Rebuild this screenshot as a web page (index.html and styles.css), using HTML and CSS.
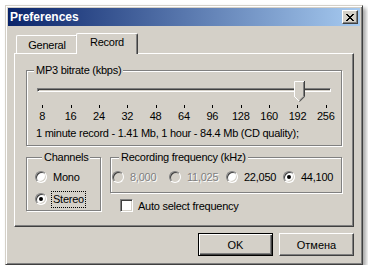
FILE: index.html
```html
<!DOCTYPE html>
<html lang="en">
<head>
  <meta charset="UTF-8">
  <title>Preferences</title>
  <link rel="stylesheet" href="styles.css">
</head>
<body>
  <div class="window">
    <!-- title bar -->
    <div class="titlebar">
      <span class="title">Preferences</span>
      <button class="close-btn">
        <svg width="8" height="7" viewBox="0 0 8 7">
          <path d="M0 0h2v1h-2zM6 0h2v1h-2zM1 1h2v1h-2zM5 1h2v1h-2zM2 2h4v1h-4zM3 3h2v1h-2zM2 4h4v1h-4zM1 5h2v1h-2zM5 5h2v1h-2zM0 6h2v1h-2zM6 6h2v1h-2z" fill="#000"/>
        </svg>
      </button>
    </div>

    <!-- tabs -->
    <div class="tabs">
      <div class="tab">General</div>
      <div class="tab active">Record</div>
    </div>

    <div class="panel">
      <!-- MP3 bitrate -->
      <div class="group bitrate">
        <span class="group-title">MP3 bitrate (kbps)</span>
        <div class="slider">
          <div class="track"></div>
          <svg class="thumb" width="11" height="21" viewBox="0 0 11 21">
            <polygon points="0,0 11,0 11,16 5.5,21 0,16" fill="#d4d0c8"/>
            <polyline points="0.5,16 0.5,0.5 10,0.5" fill="none" stroke="#fff"/>
            <polyline points="0.5,15.5 5.5,20.5" fill="none" stroke="#fff"/>
            <polyline points="10.5,0 10.5,15.7 5.5,20.7" fill="none" stroke="#404040"/>
            <polyline points="9.5,1 9.5,15.3 5.5,19.3" fill="none" stroke="#808080"/>
          </svg>
        </div>
        <div class="scale">
          <span>8</span><span>16</span><span>24</span><span>32</span><span>48</span><span>64</span>
          <span>96</span><span>128</span><span>160</span><span>192</span><span>256</span>
        </div>
        <div class="info">1 minute record - 1.41 Mb, 1 hour - 84.4 Mb (CD quality);</div>
      </div>

      <div class="row">
        <!-- Channels -->
        <div class="group channels">
          <span class="group-title">Channels</span>
          <label class="radio"><i class="dot"></i><span class="text">Mono</span></label>
          <label class="radio"><i class="dot checked"></i><span class="text focus">Stereo</span></label>
        </div>

        <div class="col">
          <!-- Recording frequency -->
          <div class="group freq">
            <span class="group-title">Recording frequency (kHz)</span>
            <div class="freq-list">
              <label class="radio disabled"><i class="dot"></i><span class="text">8,000</span></label>
              <label class="radio disabled"><i class="dot"></i><span class="text">11,025</span></label>
              <label class="radio"><i class="dot"></i><span class="text">22,050</span></label>
              <label class="radio"><i class="dot checked"></i><span class="text">44,100</span></label>
            </div>
          </div>
          <label class="check"><i class="box"></i><span>Auto select frequency</span></label>
        </div>
      </div>
    </div>

    <!-- buttons -->
    <div class="buttons">
      <button class="btn default">OK</button>
      <button class="btn">Отмена</button>
    </div>
  </div>
</body>
</html>
```
FILE: styles.css
```css
* {
  box-sizing: border-box;
}
body {
  margin: 0;
  background: #fff;
  font-family: "Liberation Sans", Arial, sans-serif;
  font-size: 11px;
  letter-spacing: -0.25px;
  color: #000;
}
.window {
  margin: 5px 0 0 5px;
  width: 358px;
  height: 260px;
  padding: 2px;
  background: #d4d0c8;
  border: 1px solid;
  border-color: #d4d0c8 #404040 #404040 #d4d0c8;
  box-shadow: inset 1px 1px #fff, inset -1px -1px #808080, 3px 3px 4px rgba(0,0,0,0.35);
  display: flex;
  flex-direction: column;
}
.titlebar {
  height: 18px;
  background: linear-gradient(90deg, #0a246a, #a6caf0);
  display: flex;
  align-items: center;
  justify-content: space-between;
  padding: 0 2px 0 2px;
}
.title {
  color: #fff;
  font-weight: bold;
  font-size: 12px;
  letter-spacing: 0;
}
.close-btn {
  width: 16px;
  height: 14px;
  padding: 0;
  background: #d4d0c8;
  border: 1px solid;
  border-color: #fff #404040 #404040 #fff;
  box-shadow: inset -1px -1px #808080;
  display: flex;
  align-items: center;
  justify-content: center;
}
/* tabs */
.tabs {
  display: flex;
  align-items: flex-end;
  height: 20px;
  margin: 7px 6px 0;
  position: relative;
  z-index: 1;
}
.tab {
  width: 62px;
  height: 18px;
  margin-left: 2px;
  padding-top: 3px;
  text-align: center;
  background: #d4d0c8;
  border-top: 1px solid #fff;
  border-left: 1px solid #fff;
  border-right: 1px solid #404040;
  border-radius: 2px 2px 0 0;
  box-shadow: inset -1px 0 #808080;
}
.tab.active {
  height: 21px;
  margin: 0 0 -1px -2px;
  padding-top: 2px;
  position: relative;
}
/* panel */
.panel {
  height: 174px;
  margin: 0 6px;
  padding: 16px 0 0 11px;
  border: 1px solid;
  border-color: #fff #404040 #404040 #fff;
  box-shadow: inset -1px -1px #808080;
}
/* group boxes */
.group {
  border: 1px solid #808080;
  box-shadow: 1px 1px #fff, inset 1px 1px #fff;
}
.group-title {
  display: block;
  width: fit-content;
  margin: -7px 0 0 7px;
  padding: 0 2px;
  line-height: 13px;
  background: #d4d0c8;
}
.bitrate {
  width: 316px;
  height: 76px;
}
.slider {
  position: relative;
  width: 294px;
  height: 21px;
  margin: 4px 0 0 10px;
  padding-top: 7px;
}
.track {
  height: 4px;
  border: 1px solid;
  border-color: #808080 #fff #fff #808080;
  box-shadow: inset 1px 1px #404040;
}
.thumb {
  position: absolute;
  left: 257px;
  top: 0;
}
.scale {
  display: grid;
  grid-template-columns: repeat(11, 1fr);
  width: 312px;
  margin: 3px 0 0 1px;
}
.scale span {
  text-align: center;
  line-height: 13px;
  padding-top: 5px;
  position: relative;
}
.scale span::before {
  content: "";
  position: absolute;
  top: 0;
  left: 50%;
  width: 1px;
  height: 3px;
  background: #000;
}
.info {
  margin: 4px 0 0 9px;
  line-height: 13px;
}
.row {
  display: flex;
  gap: 9px;
  margin-top: 11px;
}
.channels {
  width: 75px;
  height: 54px;
  padding-left: 8px;
}
.col {
  display: flex;
  flex-direction: column;
}
.freq {
  width: 232px;
  height: 36px;
  padding-left: 1px;
}
.freq-list {
  display: grid;
  grid-template-columns: repeat(4, 57px);
}
/* radio buttons */
.radio {
  display: flex;
  align-items: center;
  gap: 4px;
  height: 22px;
}
.channels .radio:first-of-type {
  margin-top: 2px;
}
.freq .radio {
  margin-top: 2px;
}
.dot {
  width: 12px;
  height: 12px;
  border-radius: 50%;
  border: 1px solid;
  border-color: #808080 #fff #fff #808080;
  box-shadow: inset 1px 1px #404040, inset -1px -1px #d4d0c8;
  background: #fff;
  display: flex;
  align-items: center;
  justify-content: center;
  flex: none;
}
.dot.checked::after {
  content: "";
  width: 4px;
  height: 4px;
  border-radius: 50%;
  background: #000;
}
.radio .text {
  padding: 1px 1px;
  border: 1px solid transparent;
  line-height: 13px;
}
.radio .text.focus {
  border: 1px dotted #000;
}
.disabled .dot {
  background: #d4d0c8;
}
.disabled .text {
  color: #808080;
  text-shadow: 1px 1px #fff;
}
/* checkbox */
.check {
  display: flex;
  align-items: center;
  gap: 5px;
  margin: 6px 0 0 10px;
}
.box {
  width: 13px;
  height: 13px;
  background: #fff;
  border: 1px solid;
  border-color: #808080 #fff #fff #808080;
  box-shadow: inset 1px 1px #404040, inset -1px -1px #d4d0c8;
}
/* bottom buttons */
.buttons {
  display: flex;
  justify-content: flex-end;
  gap: 6px;
  margin: 6px 6px 0 0;
}
.btn {
  width: 75px;
  height: 23px;
  padding: 0;
  font-family: "Liberation Sans", Arial, sans-serif;
  font-size: 11px;
  color: #000;
  background: #d4d0c8;
  border: 1px solid;
  border-color: #fff #404040 #404040 #fff;
  box-shadow: inset -1px -1px #808080;
}
.btn.default {
  border: 1px solid #000;
  box-shadow: inset 1px 1px #fff, inset -1px -1px #404040, inset -2px -2px #808080;
}
```
